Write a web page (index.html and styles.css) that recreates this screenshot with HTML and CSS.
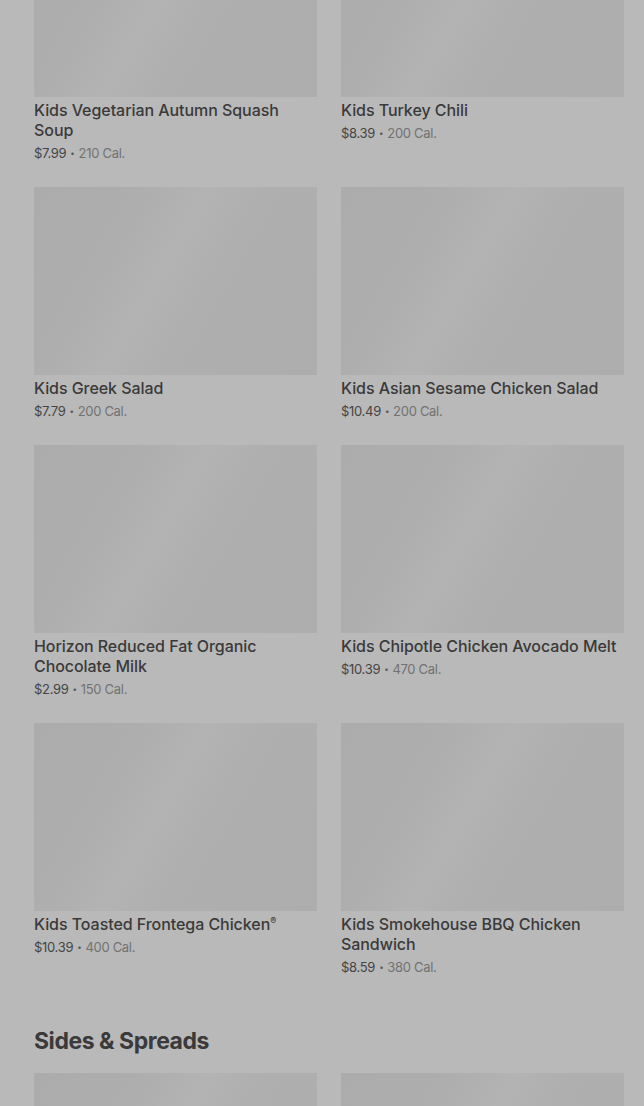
FILE: index.html
```html
<!DOCTYPE html>
<html>
<head>
<meta charset="utf-8">
<link rel="stylesheet" href="styles.css">
</head>
<body>
<main class="page">
  <section class="grid">
    <article class="item"><div class="thumb"></div><div class="info"><div class="name">Kids Vegetarian Autumn Squash Soup</div><div class="meta"><span class="price">$7.99</span><span class="dot">•</span>210 Cal.</div></div></article>
    <article class="item"><div class="thumb"></div><div class="info"><div class="name">Kids Turkey Chili</div><div class="meta"><span class="price">$8.39</span><span class="dot">•</span>200 Cal.</div></div></article>
    <article class="item"><div class="thumb"></div><div class="info"><div class="name">Kids Greek Salad</div><div class="meta"><span class="price">$7.79</span><span class="dot">•</span>200 Cal.</div></div></article>
    <article class="item"><div class="thumb"></div><div class="info"><div class="name">Kids Asian Sesame Chicken Salad</div><div class="meta"><span class="price">$10.49</span><span class="dot">•</span>200 Cal.</div></div></article>
    <article class="item"><div class="thumb"></div><div class="info"><div class="name">Horizon Reduced Fat Organic Chocolate Milk</div><div class="meta"><span class="price">$2.99</span><span class="dot">•</span>150 Cal.</div></div></article>
    <article class="item"><div class="thumb"></div><div class="info"><div class="name">Kids Chipotle Chicken Avocado Melt</div><div class="meta"><span class="price">$10.39</span><span class="dot">•</span>470 Cal.</div></div></article>
    <article class="item"><div class="thumb"></div><div class="info"><div class="name">Kids Toasted Frontega Chicken<sup>®</sup></div><div class="meta"><span class="price">$10.39</span><span class="dot">•</span>400 Cal.</div></div></article>
    <article class="item"><div class="thumb"></div><div class="info"><div class="name">Kids Smokehouse BBQ Chicken Sandwich</div><div class="meta"><span class="price">$8.59</span><span class="dot">•</span>380 Cal.</div></div></article>
  </section>
  <h2 class="section-title">Sides &amp; Spreads</h2>
  <section class="grid">
    <article class="item"><div class="thumb"></div></article>
    <article class="item"><div class="thumb"></div></article>
  </section>
</main>
</body>
</html>
```
FILE: styles.css
```css
html, body {
  margin: 0;
  padding: 0;
  background: #b9b9b9;
  overflow: hidden;
}
body {
  font-family: Inter, "Noto Sans", sans-serif;
  color: #3a3a3a;
}
.page {
  margin-top: -91px;
  padding: 0 20px 0 34px;
}
.grid {
  display: grid;
  grid-template-columns: 283px 283px;
  column-gap: 24px;
  row-gap: 24px;
}
.thumb {
  height: 188px;
  background: linear-gradient(120deg, #acacac 0%, #adadad 25%, #b3b3b3 45%, #afafaf 60%, #adadad 100%);
}
.info {
  padding-top: 3px;
}
.name {
  font-size: 16px;
  font-weight: 500;
  line-height: 20px;
  letter-spacing: -0.06px;
  color: #3a3a3a;
}
.name sup {
  font-size: 9px;
  line-height: 0;
  vertical-align: 6px;
}
.meta {
  margin-top: 3px;
  font-size: 13px;
  line-height: 20px;
  letter-spacing: -0.3px;
  color: #727272;
}
.price {
  color: #454545;
}
.dot {
  font-size: 8px;
  margin: 0 4px;
  vertical-align: 2px;
  color: #5a5a5a;
}
.section-title {
  margin: 48px 0 16px;
  font-size: 23px;
  line-height: 32px;
  font-weight: 700;
  color: #3a3a3a;
  letter-spacing: -0.45px;
}
```
